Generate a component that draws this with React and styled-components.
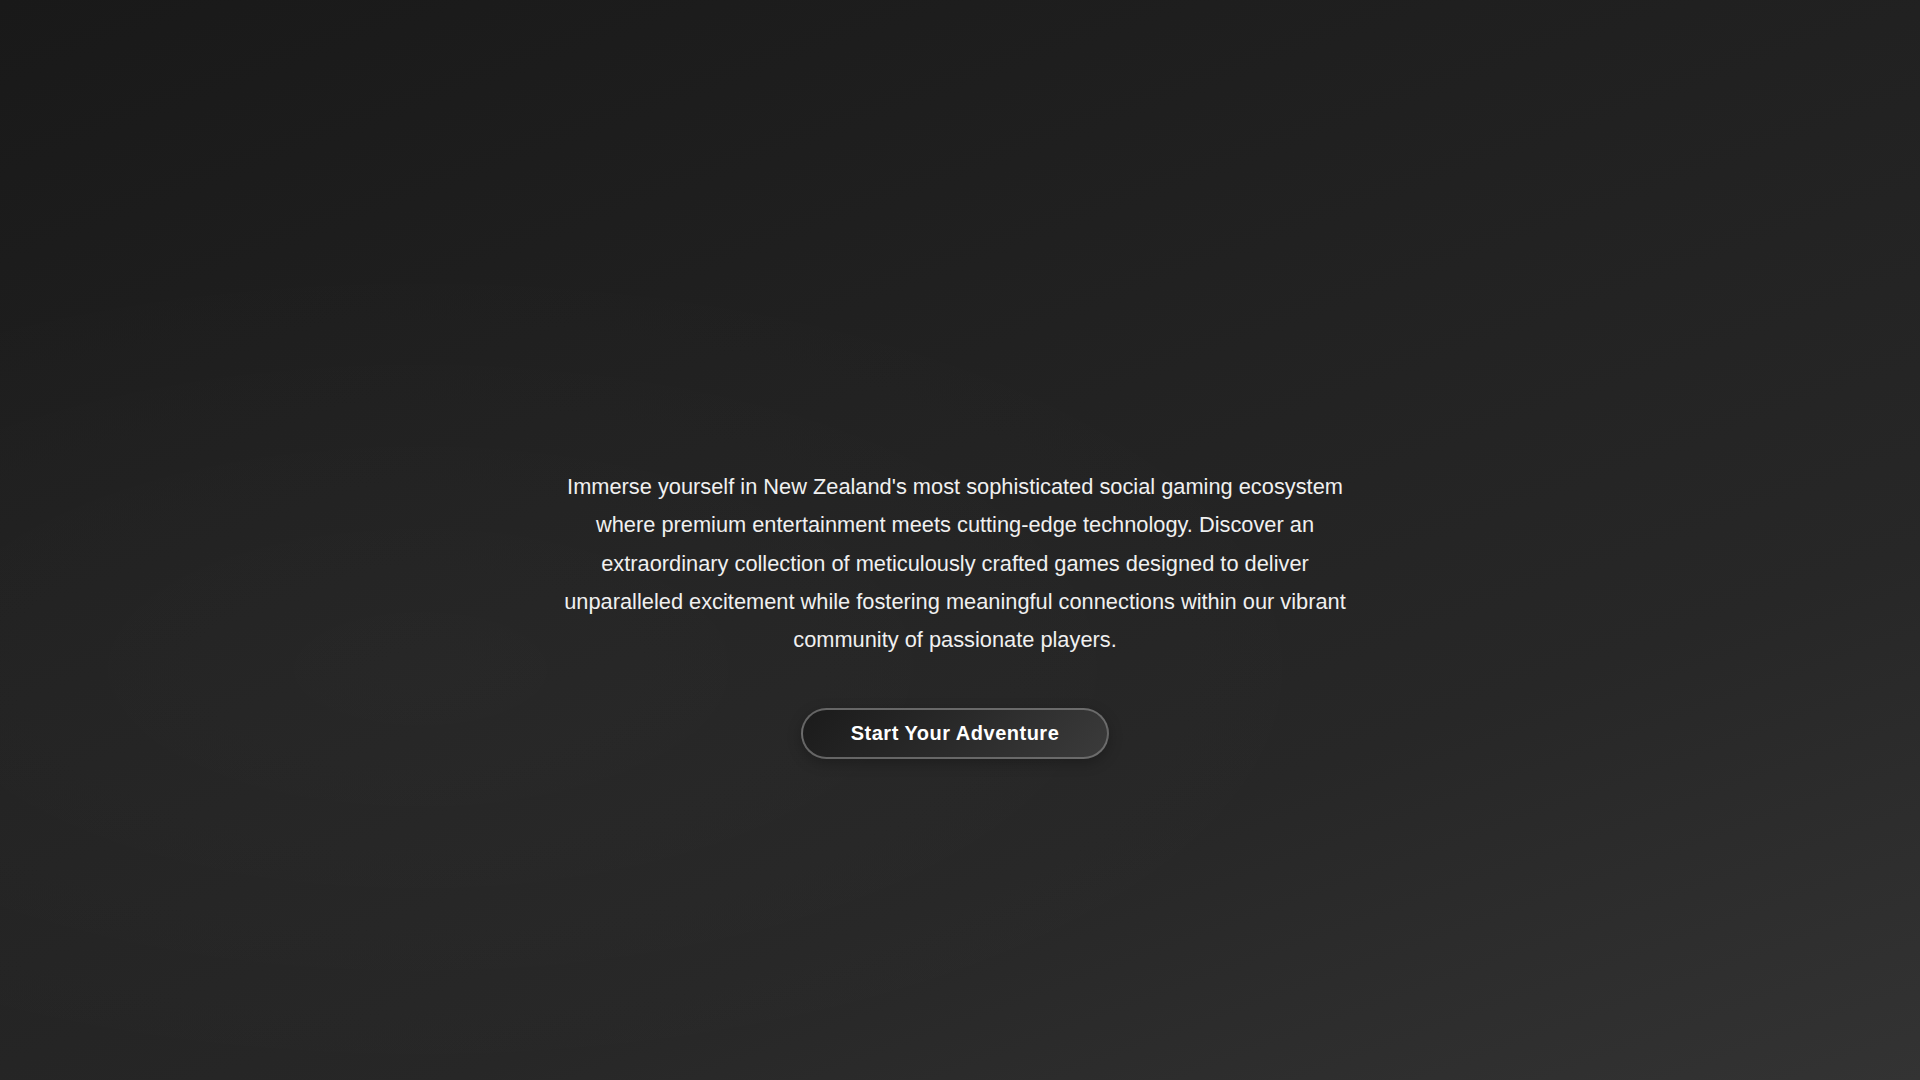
import React from "react";
import styled, { createGlobalStyle } from "styled-components";

const GlobalStyle = createGlobalStyle`
  * {
    box-sizing: border-box;
  }
  html, body {
    margin: 0;
    padding: 0;
    background: #1f1f1f;
    font-family: "Liberation Sans", Arial, sans-serif;
    color: #f2f2f2;
  }
  ::-webkit-scrollbar {
    width: 10px;
  }
  ::-webkit-scrollbar-track {
    background: #fafafa;
  }
  ::-webkit-scrollbar-thumb {
    background: #111;
    border-radius: 6px;
    border: 2px solid #fafafa;
  }
`;

const Hero = styled.section`
  position: relative;
  min-height: 100vh;
  display: flex;
  flex-direction: column;
  align-items: center;
  padding: 468px calc(2rem + 10px) 0 2rem;
  background:
    radial-gradient(ellipse at 22% 62%, rgba(255, 255, 255, 0.025) 0%, rgba(255, 255, 255, 0) 45%),
    linear-gradient(160deg, #191919 0%, #212121 40%, #272727 70%, #333 100%);
`;

const Lead = styled.p`
  max-width: 800px;
  margin: 0;
  font-size: 21.8px;
  line-height: 38.3px;
  text-align: center;
  color: #f0f0f0;
`;

const CtaButton = styled.button`
  margin-top: 49px;
  padding: 13px 48px;
  font-family: "Liberation Sans", Arial, sans-serif;
  font-size: 20px;
  font-weight: 700;
  letter-spacing: 0.5px;
  line-height: 21px;
  color: #fff;
  border: 2px solid rgba(125, 125, 125, 0.75);
  border-radius: 999px;
  background: linear-gradient(135deg, #1b1b1b 0%, #2a2a2a 50%, #3b3b3b 100%);
  box-shadow: 0 4px 14px rgba(0, 0, 0, 0.25);
  cursor: pointer;
`;

const Rest = styled.section`
  height: 3140px;
  background: #1f1f1f;
`;

export default function App() {
  return (
    <>
      <GlobalStyle />
      <Hero>
        <Lead>
          Immerse yourself in New Zealand's most sophisticated social gaming
          ecosystem where premium entertainment meets cutting-edge technology.
          Discover an extraordinary collection of meticulously crafted games
          designed to deliver unparalleled excitement while fostering
          meaningful connections within our vibrant community of passionate
          players.
        </Lead>
        <CtaButton>Start Your Adventure</CtaButton>
      </Hero>
      <Rest />
    </>
  );
}
